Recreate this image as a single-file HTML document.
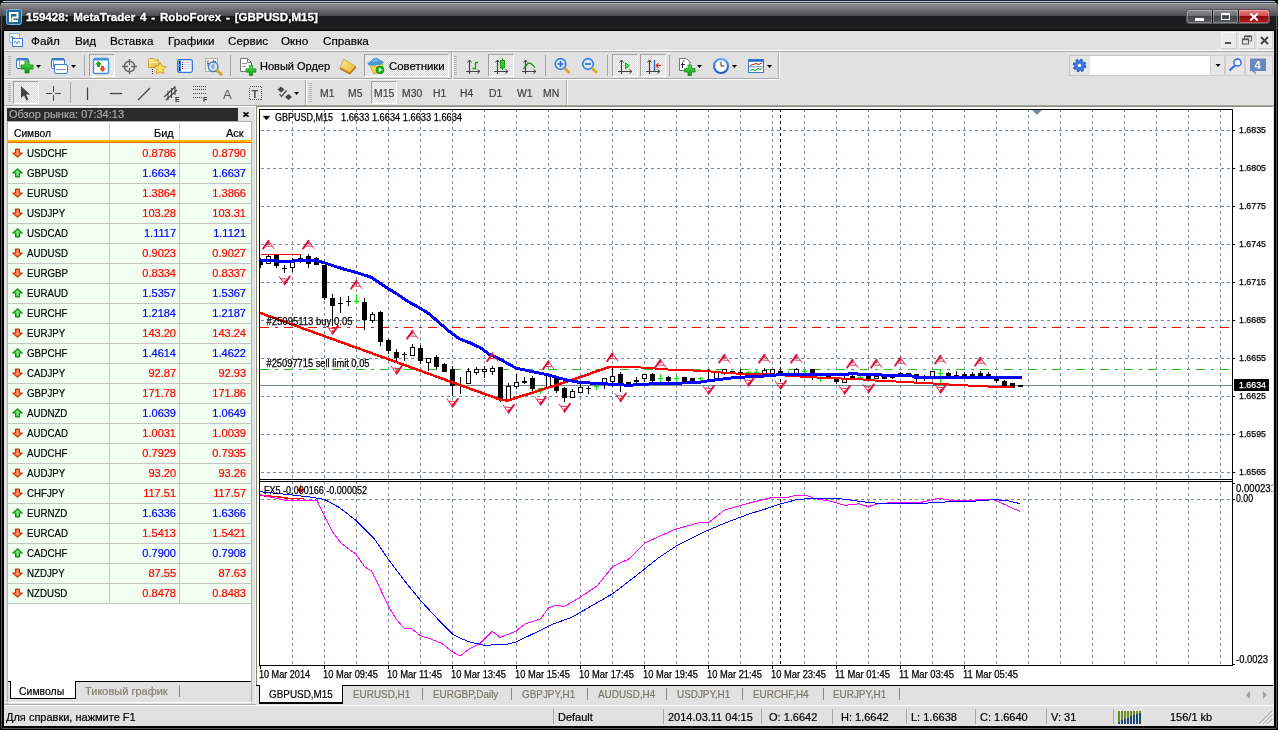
<!DOCTYPE html>
<html lang="ru">
<head>
<meta charset="utf-8">
<title>159428: MetaTrader 4 - RoboForex - [GBPUSD,M15]</title>
<style>
*{box-sizing:border-box;margin:0;padding:0}
html{width:1278px;height:730px;overflow:hidden;background:#000}
body{width:1278px;height:730px;overflow:hidden;background:transparent;will-change:transform}
body{position:relative;font-family:"Liberation Sans",sans-serif;font-size:11px;color:#000;line-height:1}
.a{position:absolute}
.t{position:absolute;white-space:nowrap;line-height:12px;-webkit-text-stroke:.2px}
#title{left:0;top:0;width:1278px;height:31px;background:linear-gradient(#222 0,#222 1px,#aec6ee 1px,#aec6ee 2px,#333 2px,#333 3px,#b0b0b2 3px,#b0b0b2 4px,#8c8c90 4px,#4c4c50 16px,#1d1d1f 16px,#1d1d1f 30px,#000 30px);border-radius:7px 7px 0 0}
#client{left:4px;top:31px;width:1270px;height:695px;background:#e1e1e1}
#ttext{left:26px;top:10px;color:#fff;font-weight:bold;font-size:11.6px;word-spacing:1.6px;-webkit-text-stroke:.3px #fff;line-height:14px;text-shadow:0 0 3px #000,0 1px 2px #000}
.menu{top:34px;font-size:11.7px;line-height:13px}
.hl{position:absolute;height:1px}
.vl{position:absolute;width:1px}
.chk{background-color:#f4f4f4;background-image:linear-gradient(45deg,#dcdcdc 25%,transparent 25%,transparent 75%,#dcdcdc 75%),linear-gradient(45deg,#dcdcdc 25%,transparent 25%,transparent 75%,#dcdcdc 75%);background-size:2px 2px;background-position:0 0,1px 1px;border:1px solid #fff;border-top-color:#a0a0a0;border-left-color:#a0a0a0}
.grip{position:absolute;width:3px;background:repeating-linear-gradient(#b4b4b4 0,#b4b4b4 1px,transparent 1px,transparent 2px)}
.tf{top:88px;font-size:10px;color:#444;line-height:12px;transform:scaleX(1.04);transform-origin:0 0}
.row{position:absolute;left:8px;width:243px;height:20px;background:#f0fff0;border-bottom:1px solid #c4c4c4}
.row span{-webkit-text-stroke:.2px}
.row .s{position:absolute;left:19px;top:3px;line-height:12px;transform:scaleX(.88);transform-origin:0 0}
.row .b{position:absolute;right:75px;top:3px;line-height:12px}
.row .k{position:absolute;right:5px;top:3px;line-height:12px}
.row .c1{position:absolute;left:101px;top:0;width:1px;height:19px;background:#c4c4c4}
.row .c2{position:absolute;left:171px;top:0;width:1px;height:19px;background:#c4c4c4}
.up .b,.up .k{color:#0000ff}
.dn .b,.dn .k{color:#ff0000}
.ar{position:absolute;left:4px;top:4px;width:11px;height:11px}
.ctab{top:688px;font-size:11px;color:#7a776a;line-height:12px;transform:scaleX(.9);transform-origin:0 0}
.st{top:711px;font-size:11px;line-height:12px}
svg text{font-family:"Liberation Sans",sans-serif}
</style>
</head>
<body>
<div id="title" class="a"></div>
<svg class="a" style="left:6px;top:9px" width="16" height="16" viewBox="0 0 16 16"><rect x="0.5" y="0.5" width="15" height="15" rx="2" fill="#1f6b9a" stroke="#7fb4d6"/><path d="M4 13V4h7.5v4.5H6.5M6.5 8.5V12h5.5" fill="none" stroke="#fff" stroke-width="2"/></svg>
<div id="ttext" class="t">159428: MetaTrader 4 - RoboForex - [GBPUSD,M15]</div>
<!-- window buttons -->
<div class="a" style="left:1186px;top:9px;width:84px;height:15px;border-radius:3px;background:#111;border:1px solid #55575b"></div>
<div class="a" style="left:1187px;top:10px;width:25px;height:13px;background:linear-gradient(#8a8b8f 0,#6c6d71 46%,#45464a 50%,#58595d 100%);box-shadow:inset 0 0 0 1px rgba(255,255,255,.28);border-radius:2px 0 0 2px"></div>
<div class="a" style="left:1213px;top:10px;width:25px;height:13px;background:linear-gradient(#8a8b8f 0,#6c6d71 46%,#45464a 50%,#58595d 100%);box-shadow:inset 0 0 0 1px rgba(255,255,255,.28)"></div>
<div class="a" style="left:1239px;top:10px;width:30px;height:13px;background:linear-gradient(#ea8080 0,#d05054 46%,#8a0a0c 50%,#a82024 100%);box-shadow:inset 0 0 0 1px rgba(255,255,255,.25);border-radius:0 2px 2px 0"></div>
<div class="a" style="left:1195px;top:18px;width:9px;height:3px;background:#fff"></div>
<div class="a" style="left:1221px;top:13px;width:9px;height:7px;border:1px solid #fff;border-top-width:2px"></div>
<svg class="a" style="left:1249px;top:13px" width="10" height="8" viewBox="0 0 10 8"><path d="M1.300 .5L8.700 7.500M8.700 .5L1.300 7.500" stroke="#fff" stroke-width="2"/></svg>
<div class="vl" style="left:1px;top:8px;height:720px;background:#555"></div><div class="vl" style="left:1276px;top:12px;height:716px;background:#555"></div><div class="hl" style="left:2px;top:728px;width:1274px;background:#555"></div>
<div id="client" class="a"></div>
<!-- menu bar -->
<div class="hl" style="left:4px;top:50px;width:1270px;background:#fff"></div>
<div class="hl" style="left:4px;top:51px;width:1270px;background:#a8a8a8"></div>
<svg class="a" style="left:8px;top:32px" width="16" height="16" viewBox="0 0 16 16"><rect x="1.5" y="1.5" width="10" height="9" fill="#f4f8ff" stroke="#3b7ad8" stroke-dasharray="1 1"/><rect x="4.5" y="6.5" width="10" height="8" fill="#fff" stroke="#3b7ad8"/><path d="M3 6l1-2 1 3 1-2M6 11l1.5-2 1.5 3 1.5-3 1.5 2" fill="none" stroke="#3b7ad8" stroke-width=".8"/></svg>
<div class="t menu" style="left:31px">Файл</div>
<div class="t menu" style="left:75px">Вид</div>
<div class="t menu" style="left:110px">Вставка</div>
<div class="t menu" style="left:168px">Графики</div>
<div class="t menu" style="left:228px">Сервис</div>
<div class="t menu" style="left:281px">Окно</div>
<div class="t menu" style="left:323px">Справка</div>
<!-- mdi buttons -->
<div class="a" style="left:1221px;top:32px;width:16px;height:17px;background:#eaeaea;border:1px solid #f4f4f4;border-right-color:#cfcfcf;border-bottom-color:#cfcfcf"></div>
<div class="a" style="left:1239px;top:32px;width:16px;height:17px;background:#eaeaea;border:1px solid #f4f4f4;border-right-color:#cfcfcf;border-bottom-color:#cfcfcf"></div>
<div class="a" style="left:1257px;top:32px;width:16px;height:17px;background:#eaeaea;border:1px solid #f4f4f4;border-right-color:#cfcfcf;border-bottom-color:#cfcfcf"></div>
<div class="a" style="left:1225px;top:42px;width:6px;height:2px;background:#555"></div>
<svg class="a" style="left:1242px;top:35px" width="10" height="10" viewBox="0 0 10 10"><path d="M2.5 3V1h7v5h-2" fill="none" stroke="#555" stroke-width="1"/><path d="M2.5 1.5h7" stroke="#555" stroke-width="1.5"/><rect x="0.5" y="4" width="6" height="5" fill="none" stroke="#555"/><path d="M0.5 4.5h6" stroke="#555" stroke-width="1.5"/></svg>
<svg class="a" style="left:1260px;top:36px" width="9" height="9" viewBox="0 0 9 9"><path d="M1 1L8 8M8 1L1 8" stroke="#444" stroke-width="2"/></svg>
<!-- toolbar rows separators -->
<div class="hl" style="left:4px;top:78px;width:776px;background:#a8a8a8"></div>
<div class="hl" style="left:4px;top:79px;width:776px;background:#fff"></div>
<div class="hl" style="left:4px;top:105px;width:1270px;background:#a8a8a8"></div>
<div class="vl" style="left:778px;top:52px;height:27px;background:#a8a8a8"></div>
<div class="vl" style="left:779px;top:52px;height:27px;background:#fff"></div>
<div class="vl" style="left:566px;top:80px;height:25px;background:#a8a8a8"></div>
<div class="vl" style="left:567px;top:80px;height:25px;background:#fff"></div>
<div class="grip" style="left:8px;top:56px;height:19px"></div>
<div class="grip" style="left:8px;top:83px;height:19px"></div>
<div class="grip" style="left:454px;top:56px;height:19px"></div>
<div class="grip" style="left:309px;top:83px;height:19px"></div>
<div class="vl" style="left:305px;top:80px;height:25px;background:#a8a8a8"></div>
<div class="vl" style="left:306px;top:80px;height:25px;background:#fff"></div>
<div class="vl" style="left:451px;top:52px;height:27px;background:#a8a8a8"></div>
<div class="vl" style="left:452px;top:52px;height:27px;background:#fff"></div>
<!-- pressed buttons -->
<div class="a chk" style="left:89px;top:54px;width:26px;height:23px"></div>
<div class="a chk" style="left:364px;top:54px;width:85px;height:23px"></div>
<div class="a chk" style="left:488px;top:54px;width:26px;height:23px"></div>
<div class="a chk" style="left:612px;top:54px;width:26px;height:23px"></div>
<div class="a chk" style="left:640px;top:54px;width:26px;height:23px"></div>
<div class="a chk" style="left:13px;top:81px;width:26px;height:23px"></div>
<div class="a chk" style="left:371px;top:81px;width:26px;height:23px"></div>
<svg class="a" style="left:0;top:0" width="1278" height="108" viewBox="0 0 1278 108">
<defs>
<linearGradient id="gp" x1="0" y1="0" x2="0" y2="1"><stop offset="0" stop-color="#5be25b"/><stop offset="1" stop-color="#0a9a0a"/></linearGradient>
<linearGradient id="gy" x1="0" y1="0" x2="1" y2="1"><stop offset="0" stop-color="#fff2a8"/><stop offset="1" stop-color="#e8b028"/></linearGradient>
<linearGradient id="gb" x1="0" y1="0" x2="0" y2="1"><stop offset="0" stop-color="#5aa0f0"/><stop offset="1" stop-color="#1c5fc0"/></linearGradient>
<g id="dd"><path d="M0 0h5l-2.5 3z" fill="#000"/></g>
<g id="plus"><path d="M4 0h4v4h4v4h-4v4h-4v-4h-4v-4h4z" fill="url(#gp)" stroke="#0a8a0a" stroke-width=".8"/></g>
<g id="axes"><path d="M3.5 0v14M0 11.5h14" stroke="#444" stroke-width="1.2" fill="none"/><path d="M1.5 2.5l2-2.5 2 2.5M11.5 9.5l2.5 2-2.5 2" stroke="#444" stroke-width="1" fill="none"/></g>
</defs>
<!-- separators -->
<g stroke="#a4a4a4"><path d="M84.5 55v21M230.500 55v21M545.500 55v21M607.500 55v21M669.500 55v21M70.500 82v21"/></g>
<!-- new chart -->
<rect x="16.500" y="58.500" width="12" height="10" rx="1.500" fill="#fff" stroke="#3a7bc8"/><path d="M17 59.500h11" stroke="#3a7bc8" stroke-width="2"/><path d="M19.500 61v6" stroke="#8aa0b8"/>
<use href="#plus" x="21" y="61"/>
<use href="#dd" x="36" y="65"/>
<!-- profiles -->
<rect x="51.500" y="58.500" width="13" height="10" rx="1.500" fill="#fff" stroke="#3a7bc8"/><path d="M52 59.500h12" stroke="#3a7bc8" stroke-width="2"/><path d="M53.500 61v6M54 64.500h8" stroke="#7f9ab8"/>
<rect x="54.500" y="64.500" width="13" height="9" rx="1.500" fill="#fff" stroke="#3a7bc8"/><path d="M56 69.500h10" stroke="#7f9ab8"/>
<use href="#dd" x="71" y="65"/>
<!-- market watch -->
<rect x="93.500" y="58.500" width="15" height="15" rx="1.500" fill="#fff" stroke="#4a90e0" stroke-width="1.400"/><path d="M94 59.500h14" stroke="#4a90e0" stroke-width="2"/>
<path d="M98.500 61l3.500 3.500h-2v2.500h-3v-2.500h-2z" fill="#18a818"/><path d="M102.500 72l-3.500-3.500h2v-2.500h3v2.500h2z" fill="#e8501c"/>
<!-- navigator crosshair -->
<circle cx="129.500" cy="66.500" r="5.200" fill="none" stroke="#666" stroke-width="1.500"/><path d="M129.500 59v6M129.500 68v6M122 66.500h6M131 66.500h6" stroke="#666" stroke-width="1.300"/>
<!-- folder star -->
<path d="M148.500 59.500l1-1h4l1.500 1.500h3.500v7.500h-10z" fill="url(#gy)" stroke="#c8a028"/><path d="M149 62.500h9.500" stroke="#fff6c8"/><path d="M160 62.200l1.900 3.800 4.200.6-3 3 .7 4.200-3.800-2-3.800 2 .7-4.200-3-3 4.200-.6z" fill="#ffe25a" stroke="#c89a20" stroke-width=".9"/><path d="M152.500 69v6" stroke="#333" stroke-dasharray="1 1" shape-rendering="crispEdges"/>
<!-- terminal window -->
<rect x="177.700" y="59.700" width="14.600" height="12.600" rx="1.500" fill="#fff" stroke="#2a6fd8" stroke-width="1.200"/><path d="M178.500 60.500h2.500v11h-2.500z" fill="#3a7ae0"/><path d="M179.500 61v3M179.500 67v4" stroke="#222"/><path d="M183 62.500h8M183 64.500h8M183 66.500h8M183 68.500h8" stroke="#b8ccf0" stroke-width=".8"/><path d="M182 62.500h1M182 68.500h1" stroke="#f02020"/><path d="M182 64.500h1M182 66.500h1" stroke="#222"/>
<!-- strategy tester -->
<rect x="205.500" y="58.500" width="12" height="13" fill="#f4f0e8" stroke="#b8b098"/><path d="M208 60v6M207 63.500h3M213.500 60v5M213 61.500h3" stroke="#666" fill="none"/><circle cx="213.200" cy="66.800" r="4.800" fill="#cfe0f8" fill-opacity=".85" stroke="#3a80e0" stroke-width="1.400"/><path d="M211.500 64.500h3v4h-3z" fill="#98a8c0"/><path d="M217 70.500l4.500 4" stroke="#d8a020" stroke-width="2.600" stroke-linecap="round"/>
<!-- new order -->
<path d="M240.500 58.500h7l4 4v9h-11z" fill="#fff" stroke="#777"/><path d="M247.500 58.500v4h4" fill="none" stroke="#777"/><path d="M242 63.500h5M242 66.500h4" stroke="#999"/>
<g transform="translate(246 65.500) scale(.83)"><use href="#plus"/></g>
<!-- book -->
<path d="M340.300 67.400l9.400 5.100 5.700-6.500.2 2-5.700 6.200-9.900-5.200z" fill="#c0801a" stroke="#a06a10" stroke-width=".6"/><path d="M343.600 59.400l11.800 6.600-5.700 6.500-9.400-5.100z" fill="url(#gy)" stroke="#c89a20" stroke-width=".8"/>
<!-- experts -->
<path d="M369 64h14l-3.500 9-6 .5z" fill="#f4d040" stroke="#c8a020" stroke-width=".8"/><path d="M370 65.500h12" stroke="#fff0a0"/><g transform="rotate(-6 375.500 62)"><ellipse cx="375.500" cy="63" rx="8.200" ry="2.600" fill="#4a98d8"/><path d="M371 62.500c0-5.500 9.500-5.500 9.500 0z" fill="#6ab4ec" stroke="#3a88c8" stroke-width=".7"/></g><circle cx="380" cy="69.800" r="4" fill="#18b018" stroke="#0a8a0a" stroke-width=".6"/><path d="M378.800 67.600v4.400l3.500-2.200z" fill="#fff"/>
<!-- chart type icons -->
<use href="#axes" x="466" y="60"/><path d="M475.500 62v7.500M475.500 62.500h2.500M472.500 68.500h3" stroke="#18a018" stroke-width="1.300" fill="none"/>
<use href="#axes" x="494" y="60"/><path d="M502.500 58.500v11.500" stroke="#0a800a"/><rect x="500.500" y="60.500" width="4" height="7.500" fill="#30d030" stroke="#0a900a" stroke-width=".8"/>
<use href="#axes" x="522" y="60"/><path d="M523.500 69c2-3 4-6 6-6s3.500 2.500 5.500 4.500" stroke="#2a8a2a" stroke-width="1.300" fill="none"/>
<!-- zoom in/out -->
<circle cx="560.500" cy="64" r="5.300" fill="#d8ecff" stroke="#3a80e0" stroke-width="1.700"/><path d="M557.500 64h6M560.500 61v6" stroke="#2a6ad0" stroke-width="1.600"/><path d="M564.500 68l5 5" stroke="#d8a828" stroke-width="2.600"/>
<circle cx="588" cy="64" r="5.300" fill="#d8ecff" stroke="#3a80e0" stroke-width="1.700"/><path d="M585 64h6" stroke="#2a6ad0" stroke-width="1.600"/><path d="M592 68l5 5" stroke="#d8a828" stroke-width="2.600"/>
<!-- autoscroll / shift -->
<use href="#axes" x="618" y="60"/><path d="M625.500 62.800v6l3.800-3z" fill="#50e050" stroke="#10a010" stroke-width=".9"/>
<use href="#axes" x="646" y="60"/><path d="M654.500 60v11" stroke="#2a60c0" stroke-width="1.300"/><path d="M656 65.500h5M656 65.500l2.500-2M656 65.500l2.500 2" stroke="#e02a10" stroke-width="1.200" fill="none"/>
<!-- indicators -->
<path d="M679.500 58.500h7l3.500 3.500v8.500h-10.500z" fill="#fff" stroke="#777"/><path d="M684.500 61c-2 0-2 1-2 3v4" stroke="#333" fill="none"/><path d="M681 64.500h4" stroke="#333"/>
<g transform="translate(684.500 65) scale(.88)"><use href="#plus"/></g>
<use href="#dd" x="697" y="65"/>
<!-- clock -->
<circle cx="721" cy="66" r="7" fill="#fff" stroke="url(#gb)" stroke-width="2.200"/><path d="M721 61.500v4.500h3.500" stroke="#333" fill="none"/>
<use href="#dd" x="732" y="65"/>
<!-- templates -->
<rect x="748.500" y="59.500" width="15" height="13" fill="#fff" stroke="#3a7bc8"/><path d="M749 60.500h14" stroke="#2a6ac8" stroke-width="2.500"/><path d="M750 65.500l3-1 3-1 3 1 3-2" stroke="#b02010" fill="none"/><path d="M749 66.800h14" stroke="#3a7bc8" stroke-width=".8"/><path d="M750 70.500l3-1 2 1 3-2 2 1 2-1" stroke="#18a018" fill="none"/>
<use href="#dd" x="767" y="65"/>
<!-- toolbar 2 -->
<path d="M21 86v12l3-2.500 2.500 5 2-1-2.500-5h4z" fill="#444"/>
<path d="M53.500 86v6M53.500 95v6M46 93.500h6M55 93.500h6" stroke="#444" stroke-width="1"/>
<path d="M87.500 87.500v12.500" stroke="#444" stroke-width="1.300"/>
<path d="M110 93.500h12" stroke="#444" stroke-width="1.300"/>
<path d="M138 100l12-12" stroke="#444" stroke-width="1.300"/>
<path d="M164 97l11-10M166 100l11-10M168 91v9M171.500 88v10M175 86v9" stroke="#444" stroke-width="1.100"/>
<text x="175" y="102" font-size="7" font-weight="bold" fill="#333">E</text>
<path d="M193 86.500h13M193 89.500h13M193 93.500h13M193 97.500h9" stroke="#444" stroke-dasharray="1 1" shape-rendering="crispEdges"/>
<text x="203" y="102" font-size="7" font-weight="bold" fill="#333">F</text>
<text x="223" y="98.500" font-size="13" fill="#555">A</text>
<rect x="249.500" y="86.500" width="12" height="13" fill="none" stroke="#555" stroke-dasharray="1 1" shape-rendering="crispEdges"/><text x="251.500" y="98" font-size="11" font-weight="bold" fill="#555">T</text>
<path d="M281 86.500l3.500 3-3.500 3-3.500-3zM288.500 94l3.500 3-3.500 3-3.500-3z" fill="#444"/><path d="M279.500 94l2 2.500 5-6" stroke="#444" fill="none" stroke-width="1.200"/>
<use href="#dd" x="294" y="92"/>
<!-- search -->
<rect x="1069.500" y="55.500" width="141" height="20" fill="#fff" stroke="#c8c8c8"/><rect x="1070" y="56" width="20" height="19" fill="#e6e6e6"/>
<circle cx="1079.500" cy="65.500" r="5.600" fill="#4a80d8" stroke="#2a62c8" stroke-dasharray="2.400 2" stroke-width="2.400"/><circle cx="1079.500" cy="65.500" r="4.300" fill="#3a76dc"/><circle cx="1079.500" cy="65.500" r="1.800" fill="#e8eefa"/>
<rect x="1210.500" y="55.500" width="14" height="20" fill="#e6e6e6" stroke="#d0d0d0"/><use href="#dd" x="1215.500" y="64"/>
<rect x="1225.500" y="55.500" width="19" height="20" fill="#e6e6e6" stroke="#d0d0d0"/><circle cx="1237.500" cy="62.500" r="3.600" fill="#fff" stroke="#2a6ad8" stroke-width="1.500"/><path d="M1235 65.500l-5.500 5" stroke="#2a6ad8" stroke-width="2"/>
<rect x="1245.500" y="55.500" width="27" height="20" fill="#e6e6e6" stroke="#d0d0d0"/><path d="M1250 58.500h16v12.500h-11l1 3.500-4-3.500h-2z" fill="#6a88bc"/><text x="1254.500" y="69" font-size="11" font-weight="bold" fill="#fff">4</text>
</svg>
<div class="t" style="left:260px;top:60px;font-size:11px;line-height:13px">Новый Ордер</div>
<div class="t" style="left:389px;top:60px;font-size:11.4px;line-height:13px">Советники</div>
<div class="t tf" style="left:320px">M1</div>
<div class="t tf" style="left:348px">M5</div>
<div class="t tf" style="left:374px">M15</div>
<div class="t tf" style="left:402px">M30</div>
<div class="t tf" style="left:433px">H1</div>
<div class="t tf" style="left:460px">H4</div>
<div class="t tf" style="left:489px">D1</div>
<div class="t tf" style="left:517px">W1</div>
<div class="t tf" style="left:543px">MN</div>
<!-- market watch -->
<div class="a" style="left:7px;top:121px;width:245px;height:583px;background:#fff;border:1px solid #b0b0b0"></div>
<div class="a" style="left:7px;top:108px;width:231px;height:13px;background:#2c2c2c"></div>
<div class="a" style="left:238px;top:108px;width:14px;height:13px;background:#e1e1e1"></div>
<div class="t" style="left:9px;top:108px;font-size:11px;color:#a8a8a8;line-height:13px">Обзор рынка: 07:34:13</div>
<svg class="a" style="left:243px;top:112px" width="6" height="5" viewBox="0 0 6 5"><path d="M.5.300l5 4.400M5.500.300l-5 4.400" stroke="#000" stroke-width="1.700"/></svg>
<div class="a" style="left:8px;top:122px;width:243px;height:18px;background:#fff"></div>
<div class="vl" style="left:109px;top:123px;height:17px;background:#d0d0d0"></div>
<div class="vl" style="left:179px;top:123px;height:17px;background:#d0d0d0"></div>
<div class="t" style="left:14px;top:127px;transform:scaleX(.93);transform-origin:0 0">Символ</div>
<div class="t" style="left:154px;top:127px">Бид</div>
<div class="t" style="left:226px;top:127px">Аск</div>
<div class="a" style="left:8px;top:140px;width:243px;height:3px;background:linear-gradient(#ffb400 0,#ffb400 2px,#ff6a00 2px)"></div>
<svg width="0" height="0" style="position:absolute"><defs>
<g id="aup"><path d="M5.500.5l5 4.500h-3v4h-4v-4h-3z" fill="#22b422" stroke="#0a7a0a" stroke-width=".9"/><path d="M5.500 2.300l2.500 2.200h-1.500v3.500h-2v-3.500h-1.500z" fill="#8fe88f"/></g>
<g id="adn"><path d="M5.500 9.500l5-4.500h-3v-4h-4v4h-3z" fill="#f0501a" stroke="#b02a08" stroke-width=".9"/><path d="M5.500 7.700l2.500-2.200h-1.500v-3.500h-2v3.500h-1.500z" fill="#ffa078"/></g>
</defs></svg>
<div class="row dn" style="top:144px"><svg class="ar" viewBox="0 0 11 11"><use href="#adn"/></svg><span class="s">USDCHF</span><i class="c1"></i><span class="b">0.8786</span><i class="c2"></i><span class="k">0.8790</span></div>
<div class="row up" style="top:164px"><svg class="ar" viewBox="0 0 11 11"><use href="#aup"/></svg><span class="s">GBPUSD</span><i class="c1"></i><span class="b">1.6634</span><i class="c2"></i><span class="k">1.6637</span></div>
<div class="row dn" style="top:184px"><svg class="ar" viewBox="0 0 11 11"><use href="#adn"/></svg><span class="s">EURUSD</span><i class="c1"></i><span class="b">1.3864</span><i class="c2"></i><span class="k">1.3866</span></div>
<div class="row dn" style="top:204px"><svg class="ar" viewBox="0 0 11 11"><use href="#adn"/></svg><span class="s">USDJPY</span><i class="c1"></i><span class="b">103.28</span><i class="c2"></i><span class="k">103.31</span></div>
<div class="row up" style="top:224px"><svg class="ar" viewBox="0 0 11 11"><use href="#aup"/></svg><span class="s">USDCAD</span><i class="c1"></i><span class="b">1.1117</span><i class="c2"></i><span class="k">1.1121</span></div>
<div class="row dn" style="top:244px"><svg class="ar" viewBox="0 0 11 11"><use href="#adn"/></svg><span class="s">AUDUSD</span><i class="c1"></i><span class="b">0.9023</span><i class="c2"></i><span class="k">0.9027</span></div>
<div class="row dn" style="top:264px"><svg class="ar" viewBox="0 0 11 11"><use href="#adn"/></svg><span class="s">EURGBP</span><i class="c1"></i><span class="b">0.8334</span><i class="c2"></i><span class="k">0.8337</span></div>
<div class="row up" style="top:284px"><svg class="ar" viewBox="0 0 11 11"><use href="#aup"/></svg><span class="s">EURAUD</span><i class="c1"></i><span class="b">1.5357</span><i class="c2"></i><span class="k">1.5367</span></div>
<div class="row up" style="top:304px"><svg class="ar" viewBox="0 0 11 11"><use href="#aup"/></svg><span class="s">EURCHF</span><i class="c1"></i><span class="b">1.2184</span><i class="c2"></i><span class="k">1.2187</span></div>
<div class="row dn" style="top:324px"><svg class="ar" viewBox="0 0 11 11"><use href="#adn"/></svg><span class="s">EURJPY</span><i class="c1"></i><span class="b">143.20</span><i class="c2"></i><span class="k">143.24</span></div>
<div class="row up" style="top:344px"><svg class="ar" viewBox="0 0 11 11"><use href="#aup"/></svg><span class="s">GBPCHF</span><i class="c1"></i><span class="b">1.4614</span><i class="c2"></i><span class="k">1.4622</span></div>
<div class="row dn" style="top:364px"><svg class="ar" viewBox="0 0 11 11"><use href="#adn"/></svg><span class="s">CADJPY</span><i class="c1"></i><span class="b">92.87</span><i class="c2"></i><span class="k">92.93</span></div>
<div class="row dn" style="top:384px"><svg class="ar" viewBox="0 0 11 11"><use href="#adn"/></svg><span class="s">GBPJPY</span><i class="c1"></i><span class="b">171.78</span><i class="c2"></i><span class="k">171.86</span></div>
<div class="row up" style="top:404px"><svg class="ar" viewBox="0 0 11 11"><use href="#aup"/></svg><span class="s">AUDNZD</span><i class="c1"></i><span class="b">1.0639</span><i class="c2"></i><span class="k">1.0649</span></div>
<div class="row dn" style="top:424px"><svg class="ar" viewBox="0 0 11 11"><use href="#adn"/></svg><span class="s">AUDCAD</span><i class="c1"></i><span class="b">1.0031</span><i class="c2"></i><span class="k">1.0039</span></div>
<div class="row dn" style="top:444px"><svg class="ar" viewBox="0 0 11 11"><use href="#adn"/></svg><span class="s">AUDCHF</span><i class="c1"></i><span class="b">0.7929</span><i class="c2"></i><span class="k">0.7935</span></div>
<div class="row dn" style="top:464px"><svg class="ar" viewBox="0 0 11 11"><use href="#adn"/></svg><span class="s">AUDJPY</span><i class="c1"></i><span class="b">93.20</span><i class="c2"></i><span class="k">93.26</span></div>
<div class="row dn" style="top:484px"><svg class="ar" viewBox="0 0 11 11"><use href="#adn"/></svg><span class="s">CHFJPY</span><i class="c1"></i><span class="b">117.51</span><i class="c2"></i><span class="k">117.57</span></div>
<div class="row up" style="top:504px"><svg class="ar" viewBox="0 0 11 11"><use href="#aup"/></svg><span class="s">EURNZD</span><i class="c1"></i><span class="b">1.6336</span><i class="c2"></i><span class="k">1.6366</span></div>
<div class="row dn" style="top:524px"><svg class="ar" viewBox="0 0 11 11"><use href="#adn"/></svg><span class="s">EURCAD</span><i class="c1"></i><span class="b">1.5413</span><i class="c2"></i><span class="k">1.5421</span></div>
<div class="row up" style="top:544px"><svg class="ar" viewBox="0 0 11 11"><use href="#aup"/></svg><span class="s">CADCHF</span><i class="c1"></i><span class="b">0.7900</span><i class="c2"></i><span class="k">0.7908</span></div>
<div class="row dn" style="top:564px"><svg class="ar" viewBox="0 0 11 11"><use href="#adn"/></svg><span class="s">NZDJPY</span><i class="c1"></i><span class="b">87.55</span><i class="c2"></i><span class="k">87.63</span></div>
<div class="row dn" style="top:584px"><svg class="ar" viewBox="0 0 11 11"><use href="#adn"/></svg><span class="s">NZDUSD</span><i class="c1"></i><span class="b">0.8478</span><i class="c2"></i><span class="k">0.8483</span></div>
<div class="hl" style="left:8px;top:143px;width:243px;background:#f0fff0"></div><div class="vl" style="left:109px;top:143px;height:1px;background:#c4c4c4"></div><div class="vl" style="left:179px;top:143px;height:1px;background:#c4c4c4"></div>
<!-- mw tabs -->
<div class="a" style="left:8px;top:681px;width:243px;height:23px;background:#e1e1e1"></div>
<div class="hl" style="left:8px;top:681px;width:243px;background:#000"></div>
<div class="a" style="left:10px;top:681px;width:66px;height:18px;background:#fff;border:1px solid #000;border-top:none"></div>
<div class="t" style="left:19px;top:685px;font-size:11px;line-height:13px;transform:scaleX(.95);transform-origin:0 0">Символы</div>
<div class="t" style="left:85px;top:685px;font-size:11px;line-height:13px;color:#858270">Тиковый график</div>
<div class="vl" style="left:179px;top:685px;height:12px;background:#888"></div>
<div class="hl" style="left:7px;top:702px;width:245px;background:#fff"></div>
<!-- chart window -->
<div class="a" style="left:256px;top:106px;width:1017px;height:579px;background:#fff;border-top:1px solid #8c8878;border-left:1px solid #8c8878"></div>
<div class="vl" style="left:256px;top:685px;height:19px;background:#8c8878"></div>
<div class="vl" style="left:255px;top:106px;height:598px;background:#f4f4f4"></div>
<div class="hl" style="left:4px;top:106px;width:251px;background:#fff"></div>
<svg class="a" style="left:0;top:0" width="1278" height="690" viewBox="0 0 1278 690" shape-rendering="crispEdges">
<defs><clipPath id="cm"><rect x="260" y="110" width="972" height="369"/></clipPath><clipPath id="cr"><rect x="1233" y="480" width="39.500" height="20"/></clipPath><clipPath id="cs"><rect x="260" y="482" width="972" height="183"/></clipPath>
<g id="fu" shape-rendering="auto" stroke="#dc143c" fill="none"><path d="M.2 .8L-5.200 8.600" stroke-width="1.900" stroke-linecap="round"/><path d="M0 .5L5.800 8.800" stroke-width=".9"/><path d="M-2.500 6L3.600 6.300" stroke-width=".9"/><path d="M0 .8L-2 4.500L.9 3.600z" fill="#dc143c" stroke-width=".5"/></g>
<g id="fd" shape-rendering="auto"><use href="#fu" transform="rotate(180)"/></g>
</defs>
<g stroke="#778899" stroke-width="1" stroke-dasharray="3 3" fill="none">
<path d="M292.5 109V479"/><path d="M292.5 481V665"/>
<path d="M324.5 109V479"/><path d="M324.5 481V665"/>
<path d="M356.5 109V479"/><path d="M356.5 481V665"/>
<path d="M388.5 109V479"/><path d="M388.5 481V665"/>
<path d="M420.5 109V479"/><path d="M420.5 481V665"/>
<path d="M452.5 109V479"/><path d="M452.5 481V665"/>
<path d="M484.5 109V479"/><path d="M484.5 481V665"/>
<path d="M516.5 109V479"/><path d="M516.5 481V665"/>
<path d="M548.5 109V479"/><path d="M548.5 481V665"/>
<path d="M580.5 109V479"/><path d="M580.5 481V665"/>
<path d="M612.5 109V479"/><path d="M612.5 481V665"/>
<path d="M644.5 109V479"/><path d="M644.5 481V665"/>
<path d="M676.5 109V479"/><path d="M676.5 481V665"/>
<path d="M708.5 109V479"/><path d="M708.5 481V665"/>
<path d="M740.5 109V479"/><path d="M740.5 481V665"/>
<path d="M772.5 109V479"/><path d="M772.5 481V665"/>
<path d="M804.5 109V479"/><path d="M804.5 481V665"/>
<path d="M836.5 109V479"/><path d="M836.5 481V665"/>
<path d="M868.5 109V479"/><path d="M868.5 481V665"/>
<path d="M900.5 109V479"/><path d="M900.5 481V665"/>
<path d="M932.5 109V479"/><path d="M932.5 481V665"/>
<path d="M964.5 109V479"/><path d="M964.5 481V665"/>
<path d="M996.5 109V479"/><path d="M996.5 481V665"/>
<path d="M1028.5 109V479"/><path d="M1028.5 481V665"/>
<path d="M1060.5 109V479"/><path d="M1060.5 481V665"/>
<path d="M1092.5 109V479"/><path d="M1092.5 481V665"/>
<path d="M1124.5 109V479"/><path d="M1124.5 481V665"/>
<path d="M1156.5 109V479"/><path d="M1156.5 481V665"/>
<path d="M1188.5 109V479"/><path d="M1188.5 481V665"/>
<path d="M1220.5 109V479"/><path d="M1220.5 481V665"/>
<path d="M261 130.5H1232"/>
<path d="M261 168.5H1232"/>
<path d="M261 206.5H1232"/>
<path d="M261 244.5H1232"/>
<path d="M261 282.5H1232"/>
<path d="M261 320.5H1232"/>
<path d="M261 358.5H1232"/>
<path d="M261 396.5H1232"/>
<path d="M261 434.5H1232"/>
<path d="M261 472.5H1232"/>
<path d="M261 499.500H1232"/>
</g>
<path d="M780.500 109V479M780.500 481V665" stroke="#000" stroke-dasharray="3 3" fill="none"/>
<path d="M260 385.500H1232" stroke="#778899"/>
<path d="M260 327.500H1232" stroke="#ff0000" stroke-dasharray="9 6 3 6"/>
<path d="M260 369.500H1232" stroke="#22c022" stroke-dasharray="9 6 3 6"/>
<path d="M1032 110h10l-5 5z" fill="#778899" shape-rendering="auto"/>
<g clip-path="url(#cm)">
<rect x="260" y="258" width="1" height="10" fill="#000"/>
<rect x="258" y="261" width="5" height="4" fill="#000"/>
<rect x="268" y="255" width="1" height="9" fill="#000"/>
<rect x="266" y="256" width="5" height="8" fill="#000"/>
<rect x="267" y="257" width="3" height="6" fill="#fff"/>
<rect x="276" y="255" width="1" height="13" fill="#000"/>
<rect x="274" y="255" width="5" height="11" fill="#000"/>
<rect x="284" y="265" width="1" height="8" fill="#000"/>
<rect x="282" y="268" width="5" height="1" fill="#000"/>
<rect x="292" y="258" width="1" height="14" fill="#000"/>
<rect x="290" y="262" width="5" height="6" fill="#000"/>
<rect x="291" y="263" width="3" height="4" fill="#fff"/>
<rect x="300" y="255" width="1" height="8" fill="#000"/>
<rect x="298" y="258" width="5" height="1" fill="#000"/>
<rect x="308" y="254" width="1" height="14" fill="#000"/>
<rect x="306" y="256" width="5" height="8" fill="#000"/>
<rect x="316" y="257" width="1" height="8" fill="#000"/>
<rect x="314" y="258" width="5" height="7" fill="#000"/>
<rect x="324" y="265" width="1" height="35" fill="#000"/>
<rect x="322" y="265" width="5" height="33" fill="#000"/>
<rect x="332" y="294" width="1" height="32" fill="#000"/>
<rect x="330" y="298" width="5" height="8" fill="#000"/>
<rect x="340" y="297" width="1" height="16" fill="#000"/>
<rect x="338" y="303" width="5" height="1" fill="#000"/>
<rect x="348" y="296" width="1" height="10" fill="#000"/>
<rect x="346" y="301" width="5" height="1" fill="#000"/>
<rect x="356" y="294" width="1" height="10" fill="#00e000"/>
<rect x="354" y="301" width="5" height="1" fill="#00e000"/>
<rect x="364" y="298" width="1" height="32" fill="#000"/>
<rect x="362" y="302" width="5" height="18" fill="#000"/>
<rect x="372" y="312" width="1" height="11" fill="#000"/>
<rect x="370" y="314" width="5" height="7" fill="#000"/>
<rect x="371" y="315" width="3" height="5" fill="#fff"/>
<rect x="380" y="311" width="1" height="35" fill="#000"/>
<rect x="378" y="312" width="5" height="30" fill="#000"/>
<rect x="388" y="339" width="1" height="15" fill="#000"/>
<rect x="386" y="340" width="5" height="11" fill="#000"/>
<rect x="396" y="349" width="1" height="12" fill="#000"/>
<rect x="394" y="352" width="5" height="6" fill="#000"/>
<rect x="404" y="352" width="1" height="9" fill="#000"/>
<rect x="402" y="354" width="5" height="1" fill="#000"/>
<rect x="412" y="344" width="1" height="12" fill="#000"/>
<rect x="410" y="347" width="5" height="9" fill="#000"/>
<rect x="411" y="348" width="3" height="7" fill="#fff"/>
<rect x="420" y="345" width="1" height="19" fill="#000"/>
<rect x="418" y="348" width="5" height="13" fill="#000"/>
<rect x="428" y="358" width="1" height="13" fill="#000"/>
<rect x="426" y="358" width="5" height="5" fill="#000"/>
<rect x="427" y="359" width="3" height="3" fill="#fff"/>
<rect x="436" y="355" width="1" height="14" fill="#000"/>
<rect x="434" y="357" width="5" height="10" fill="#000"/>
<rect x="444" y="363" width="1" height="9" fill="#000"/>
<rect x="442" y="364" width="5" height="8" fill="#000"/>
<rect x="452" y="366" width="1" height="30" fill="#000"/>
<rect x="450" y="369" width="5" height="17" fill="#000"/>
<rect x="460" y="377" width="1" height="17" fill="#000"/>
<rect x="458" y="385" width="5" height="1" fill="#000"/>
<rect x="468" y="368" width="1" height="16" fill="#000"/>
<rect x="466" y="371" width="5" height="13" fill="#000"/>
<rect x="467" y="372" width="3" height="11" fill="#fff"/>
<rect x="476" y="367" width="1" height="8" fill="#000"/>
<rect x="474" y="369" width="5" height="4" fill="#000"/>
<rect x="475" y="370" width="3" height="2" fill="#fff"/>
<rect x="484" y="366" width="1" height="12" fill="#000"/>
<rect x="482" y="369" width="5" height="3" fill="#000"/>
<rect x="483" y="370" width="3" height="1" fill="#fff"/>
<rect x="492" y="366" width="1" height="9" fill="#000"/>
<rect x="490" y="368" width="5" height="4" fill="#000"/>
<rect x="491" y="369" width="3" height="2" fill="#fff"/>
<rect x="500" y="367" width="1" height="35" fill="#000"/>
<rect x="498" y="367" width="5" height="33" fill="#000"/>
<rect x="508" y="383" width="1" height="17" fill="#000"/>
<rect x="506" y="386" width="5" height="14" fill="#000"/>
<rect x="507" y="387" width="3" height="12" fill="#fff"/>
<rect x="516" y="374" width="1" height="15" fill="#000"/>
<rect x="514" y="382" width="5" height="5" fill="#000"/>
<rect x="515" y="383" width="3" height="3" fill="#fff"/>
<rect x="524" y="377" width="1" height="7" fill="#000"/>
<rect x="522" y="381" width="5" height="2" fill="#000"/>
<rect x="532" y="376" width="1" height="16" fill="#000"/>
<rect x="530" y="378" width="5" height="11" fill="#000"/>
<rect x="540" y="388" width="1" height="6" fill="#00e000"/>
<rect x="538" y="388" width="5" height="1" fill="#00e000"/>
<rect x="548" y="374" width="1" height="14" fill="#000"/>
<rect x="546" y="374" width="5" height="14" fill="#000"/>
<rect x="547" y="375" width="3" height="12" fill="#fff"/>
<rect x="556" y="378" width="1" height="15" fill="#000"/>
<rect x="554" y="378" width="5" height="13" fill="#000"/>
<rect x="564" y="387" width="1" height="15" fill="#000"/>
<rect x="562" y="388" width="5" height="10" fill="#000"/>
<rect x="572" y="389" width="1" height="9" fill="#000"/>
<rect x="570" y="391" width="5" height="7" fill="#000"/>
<rect x="571" y="392" width="3" height="5" fill="#fff"/>
<rect x="580" y="382" width="1" height="11" fill="#000"/>
<rect x="578" y="387" width="5" height="6" fill="#000"/>
<rect x="579" y="388" width="3" height="4" fill="#fff"/>
<rect x="588" y="386" width="1" height="8" fill="#000"/>
<rect x="586" y="388" width="5" height="1" fill="#000"/>
<rect x="596" y="385" width="1" height="5" fill="#00e000"/>
<rect x="594" y="386" width="5" height="1" fill="#00e000"/>
<rect x="604" y="378" width="1" height="11" fill="#000"/>
<rect x="602" y="378" width="5" height="7" fill="#000"/>
<rect x="603" y="379" width="3" height="5" fill="#fff"/>
<rect x="612" y="368" width="1" height="19" fill="#000"/>
<rect x="610" y="376" width="5" height="6" fill="#000"/>
<rect x="611" y="377" width="3" height="4" fill="#fff"/>
<rect x="620" y="372" width="1" height="20" fill="#000"/>
<rect x="618" y="374" width="5" height="9" fill="#000"/>
<rect x="628" y="382" width="1" height="2" fill="#000"/>
<rect x="626" y="382" width="5" height="2" fill="#000"/>
<rect x="636" y="377" width="1" height="6" fill="#000"/>
<rect x="634" y="380" width="5" height="2" fill="#000"/>
<rect x="644" y="374" width="1" height="8" fill="#000"/>
<rect x="642" y="374" width="5" height="5" fill="#000"/>
<rect x="643" y="375" width="3" height="3" fill="#fff"/>
<rect x="652" y="373" width="1" height="10" fill="#000"/>
<rect x="650" y="374" width="5" height="7" fill="#000"/>
<rect x="660" y="374" width="1" height="9" fill="#00e000"/>
<rect x="658" y="378" width="5" height="1" fill="#00e000"/>
<rect x="668" y="376" width="1" height="7" fill="#000"/>
<rect x="666" y="377" width="5" height="4" fill="#000"/>
<rect x="676" y="376" width="1" height="6" fill="#00e000"/>
<rect x="674" y="378" width="5" height="1" fill="#00e000"/>
<rect x="684" y="377" width="1" height="5" fill="#000"/>
<rect x="682" y="377" width="5" height="5" fill="#000"/>
<rect x="692" y="378" width="1" height="5" fill="#000"/>
<rect x="690" y="378" width="5" height="3" fill="#000"/>
<rect x="700" y="377" width="1" height="5" fill="#00e000"/>
<rect x="698" y="378" width="5" height="1" fill="#00e000"/>
<rect x="708" y="369" width="1" height="13" fill="#000"/>
<rect x="706" y="380" width="5" height="1" fill="#000"/>
<rect x="716" y="372" width="1" height="9" fill="#000"/>
<rect x="714" y="372" width="5" height="9" fill="#000"/>
<rect x="715" y="373" width="3" height="7" fill="#fff"/>
<rect x="724" y="369" width="1" height="6" fill="#000"/>
<rect x="722" y="369" width="5" height="4" fill="#000"/>
<rect x="723" y="370" width="3" height="2" fill="#fff"/>
<rect x="732" y="371" width="1" height="2" fill="#000"/>
<rect x="730" y="371" width="5" height="2" fill="#000"/>
<rect x="740" y="369" width="1" height="7" fill="#000"/>
<rect x="738" y="372" width="5" height="1" fill="#000"/>
<rect x="748" y="371" width="1" height="4" fill="#00e000"/>
<rect x="746" y="372" width="5" height="1" fill="#00e000"/>
<rect x="756" y="370" width="1" height="5" fill="#00e000"/>
<rect x="754" y="372" width="5" height="1" fill="#00e000"/>
<rect x="764" y="368" width="1" height="6" fill="#000"/>
<rect x="762" y="370" width="5" height="4" fill="#000"/>
<rect x="763" y="371" width="3" height="2" fill="#fff"/>
<rect x="772" y="369" width="1" height="5" fill="#000"/>
<rect x="770" y="369" width="5" height="5" fill="#000"/>
<rect x="771" y="370" width="3" height="3" fill="#fff"/>
<rect x="780" y="368" width="1" height="8" fill="#000"/>
<rect x="778" y="371" width="5" height="2" fill="#000"/>
<rect x="788" y="371" width="1" height="5" fill="#00e000"/>
<rect x="786" y="373" width="5" height="1" fill="#00e000"/>
<rect x="796" y="368" width="1" height="6" fill="#000"/>
<rect x="794" y="369" width="5" height="5" fill="#000"/>
<rect x="795" y="370" width="3" height="3" fill="#fff"/>
<rect x="804" y="369" width="1" height="5" fill="#00e000"/>
<rect x="802" y="371" width="5" height="1" fill="#00e000"/>
<rect x="812" y="369" width="1" height="11" fill="#000"/>
<rect x="810" y="369" width="5" height="8" fill="#000"/>
<rect x="820" y="376" width="1" height="6" fill="#00e000"/>
<rect x="818" y="378" width="5" height="1" fill="#00e000"/>
<rect x="828" y="376" width="1" height="2" fill="#000"/>
<rect x="826" y="376" width="5" height="2" fill="#000"/>
<rect x="836" y="378" width="1" height="6" fill="#000"/>
<rect x="834" y="378" width="5" height="4" fill="#000"/>
<rect x="844" y="376" width="1" height="7" fill="#000"/>
<rect x="842" y="379" width="5" height="4" fill="#000"/>
<rect x="843" y="380" width="3" height="2" fill="#fff"/>
<rect x="852" y="375" width="1" height="4" fill="#000"/>
<rect x="850" y="376" width="5" height="3" fill="#000"/>
<rect x="860" y="376" width="1" height="4" fill="#00e000"/>
<rect x="858" y="377" width="5" height="1" fill="#00e000"/>
<rect x="868" y="376" width="1" height="4" fill="#000"/>
<rect x="866" y="376" width="5" height="4" fill="#000"/>
<rect x="876" y="376" width="1" height="3" fill="#000"/>
<rect x="874" y="376" width="5" height="3" fill="#000"/>
<rect x="875" y="377" width="3" height="1" fill="#fff"/>
<rect x="884" y="377" width="1" height="2" fill="#000"/>
<rect x="882" y="377" width="5" height="2" fill="#000"/>
<rect x="892" y="376" width="1" height="3" fill="#000"/>
<rect x="890" y="377" width="5" height="1" fill="#000"/>
<rect x="900" y="372" width="1" height="5" fill="#000"/>
<rect x="898" y="373" width="5" height="2" fill="#000"/>
<rect x="908" y="373" width="1" height="2" fill="#000"/>
<rect x="906" y="373" width="5" height="2" fill="#000"/>
<rect x="916" y="374" width="1" height="8" fill="#000"/>
<rect x="914" y="374" width="5" height="2" fill="#000"/>
<rect x="924" y="375" width="1" height="6" fill="#000"/>
<rect x="922" y="377" width="5" height="1" fill="#000"/>
<rect x="932" y="371" width="1" height="6" fill="#000"/>
<rect x="930" y="371" width="5" height="6" fill="#000"/>
<rect x="931" y="372" width="3" height="4" fill="#fff"/>
<rect x="940" y="369" width="1" height="14" fill="#00e000"/>
<rect x="938" y="373" width="5" height="1" fill="#00e000"/>
<rect x="948" y="372" width="1" height="7" fill="#000"/>
<rect x="946" y="373" width="5" height="6" fill="#000"/>
<rect x="956" y="371" width="1" height="8" fill="#000"/>
<rect x="954" y="375" width="5" height="1" fill="#000"/>
<rect x="964" y="372" width="1" height="6" fill="#000"/>
<rect x="962" y="374" width="5" height="4" fill="#000"/>
<rect x="972" y="372" width="1" height="6" fill="#000"/>
<rect x="970" y="374" width="5" height="4" fill="#000"/>
<rect x="980" y="371" width="1" height="7" fill="#000"/>
<rect x="978" y="373" width="5" height="5" fill="#000"/>
<rect x="988" y="372" width="1" height="6" fill="#000"/>
<rect x="986" y="374" width="5" height="4" fill="#000"/>
<rect x="996" y="377" width="1" height="6" fill="#000"/>
<rect x="994" y="378" width="5" height="3" fill="#000"/>
<rect x="1004" y="380" width="1" height="6" fill="#000"/>
<rect x="1002" y="381" width="5" height="5" fill="#000"/>
<rect x="1012" y="383" width="1" height="5" fill="#000"/>
<rect x="1010" y="383" width="5" height="5" fill="#000"/>
<rect x="1020" y="385" width="1" height="2" fill="#000"/>
<rect x="1018" y="385" width="5" height="2" fill="#000"/>
<path d="M261 254.500H301" stroke="#ff0000"/>
<path d="M259 312.5 L500 399.5 L508 400.6 L515 398.2 L567 381.6 L610 366.8" stroke="#ff0000" stroke-width="2.500" fill="none" stroke-linejoin="round"/>
<path d="M610 366.8 L631 366.8 L651 368.2 L669 369.6 L689 370.3 L709 371.3 L727 373.1 L745 373.9 L768 374.3 L792 376 L822 377.8 L859 379.2 L880 380.9 L898 381.6 L917 382.7 L937 383.7 L955 384.9 L975 385.8 L993 386.8 L1013 386.8" stroke="#ff0000" stroke-width="2" fill="none" stroke-linejoin="round"/>
<path d="M259 260.8 L274 260.8 L281 261.8 L289 261.8 L296 260.6 L315.5 260.6 L324 262.6 L335.3 266.4 L346.5 269.9 L356.4 272.5 L370.5 277 L379 282.4 L388.9 289 L398.7 295.1 L407.2 301 L419.9 308 L429.8 314.4 L441 324.2 L450.9 332.7 L459.4 338.8 L469.3 342.6 L480 347.5 L489 354.2 L499.2 358.8 L516.2 368.2 L536 372.4 L548.6 375 L567 380.2 L581 382.6 L600 383.5 L625.4 385.1 L640.9 384.9 L656.4 383.2 L684.6 383 L698.7 382.3 L712.8 380.2 L738.2 377.2 L759.4 376.6 L769.3 375.2 L792.4 374.5 L847.4 374.5 L850.3 373.3 L856 373.3 L858.7 374.5 L880 374.5 L882.7 375.5 L911 375.5 L915 377.2 L1008.6 377.2 L1010 377.6 L1021.6 377.6" stroke="#0000ff" stroke-width="3" fill="none" stroke-linejoin="round"/>
<use href="#fu" x="268.3" y="240"/>
<use href="#fu" x="308.3" y="240"/>
<use href="#fu" x="356.3" y="280"/>
<use href="#fu" x="412.3" y="330"/>
<use href="#fu" x="492.3" y="352.5"/>
<use href="#fu" x="548.3" y="360.5"/>
<use href="#fu" x="612.3" y="352.5"/>
<use href="#fu" x="660.3" y="359"/>
<use href="#fu" x="724.3" y="354"/>
<use href="#fu" x="764.3" y="354"/>
<use href="#fu" x="796.3" y="354"/>
<use href="#fu" x="852.3" y="359"/>
<use href="#fu" x="876.3" y="359"/>
<use href="#fu" x="900.3" y="357"/>
<use href="#fu" x="940.3" y="355"/>
<use href="#fu" x="980.3" y="357"/>
<use href="#fd" x="284.7" y="285"/>
<use href="#fd" x="332.7" y="334.5"/>
<use href="#fd" x="396.7" y="374.5"/>
<use href="#fd" x="452.7" y="407.5"/>
<use href="#fd" x="508.7" y="413.5"/>
<use href="#fd" x="540.7" y="405.5"/>
<use href="#fd" x="564.7" y="412.5"/>
<use href="#fd" x="620.7" y="402"/>
<use href="#fd" x="708.7" y="394.5"/>
<use href="#fd" x="748.7" y="386.5"/>
<use href="#fd" x="780.7" y="389.5"/>
<use href="#fd" x="844.7" y="394.5"/>
<use href="#fd" x="868.7" y="393"/>
<use href="#fd" x="940.7" y="393.5"/>
</g>
<g clip-path="url(#cs)" fill="none" stroke-width="1">
<path d="M260 495.500L275 496.500L290 498.500L304 498.500" stroke="#ff0000" stroke-width="1.500"/>
<path d="M256 493.5 L270 497 L287.3 500.7 L300 500.5 L316.9 500.3 L324.7 516.4 L332.5 532 L341.6 543.7 L355.9 554.1 L365 567.1 L371.5 571 L378 584 L388.4 606.2 L396.3 619.2 L404 628.3 L411.9 629 L421 636.1 L430 638.7 L441.8 643.4 L452.2 651.7 L460 656.1 L469.1 649 L480 643.4 L492.3 631.2 L500.1 637.4 L515.8 631.2 L525.2 624 L540.8 618.7 L548.6 607.7 L556.5 605.2 L564.3 606.5 L578.4 598.3 L597.2 585.8 L612.8 566.4 L628.5 559.2 L645.7 542.6 L656 537.9 L674.4 529.5 L699.5 522.6 L708.9 522.3 L724.5 510.1 L746.4 503.8 L771.5 497.5 L787.1 497.5 L796.5 495 L805.9 495 L815.3 498.8 L830.9 501.3 L845 505.4 L859.1 503.8 L868.5 506.6 L877.9 503.8 L896.6 502.2 L921.7 502.2 L938.9 498.2 L953 500.7 L971.8 500.7 L981.2 499.1 L993.7 499.7 L1003.1 503.8 L1012.4 508.2 L1019.7 511.3" stroke="#ff00ff"/>
<path d="M256 491.3 L287.3 494.4 L312 497.2 L324.7 499.5 L339 507.3 L355.9 520.3 L374.1 538.5 L388.4 559.3 L404 580.2 L421 601 L437.9 619.2 L453.5 634.8 L461 638.5 L469.1 641.8 L480 644.3 L484.5 645.3 L506.4 644.3 L515.8 642.1 L553.3 624 L572.1 617.1 L612.8 593.6 L640 572.7 L658.8 557.6 L677.6 545.1 L702.6 532.6 L724.5 523.2 L749.5 513.8 L765.2 509.1 L780.8 503.8 L796.5 499.7 L812.1 498.2 L840.3 498.8 L871.6 502.9 L899.8 503.8 L921.7 503.5 L937.3 502.2 L971.8 501.3 L993.7 499.7 L1006.2 500.4 L1019.7 503.5" stroke="#0000ff"/>
<path d="M300.500 485v8M298 489.500l2.500 3.500 2.500-3.500z" stroke="#ff0000" fill="#ff0000"/>
</g>
<path d="M259.500 109V666M259 109.500H1233M1232.500 109V666M259 479.500H1233M259 481.500H1233M259 665.500H1233" stroke="#000" fill="none"/>
<path d="M1233 130.5h2M1233 168.5h2M1233 206.5h2M1233 244.5h2M1233 282.5h2M1233 320.5h2M1233 358.5h2M1233 396.5h2M1233 434.5h2M1233 472.5h2M1233 483.500h2M1233 499.500h2M1233 664.500h2M260.5 666v3M324.5 666v3M388.5 666v3M452.5 666v3M516.5 666v3M580.5 666v3M644.5 666v3M708.5 666v3M772.5 666v3M836.5 666v3M900.5 666v3M964.5 666v3" stroke="#000" fill="none"/>
<rect x="1234" y="379" width="35" height="12" fill="#000"/>
<g shape-rendering="auto" font-size="10" fill="#000" stroke="#000" stroke-width=".25">
<text x="1239" y="133" font-size="9.700" textLength="27" lengthAdjust="spacingAndGlyphs">1.6835</text>
<text x="1239" y="171" font-size="9.700" textLength="27" lengthAdjust="spacingAndGlyphs">1.6805</text>
<text x="1239" y="209" font-size="9.700" textLength="27" lengthAdjust="spacingAndGlyphs">1.6775</text>
<text x="1239" y="247" font-size="9.700" textLength="27" lengthAdjust="spacingAndGlyphs">1.6745</text>
<text x="1239" y="285" font-size="9.700" textLength="27" lengthAdjust="spacingAndGlyphs">1.6715</text>
<text x="1239" y="323" font-size="9.700" textLength="27" lengthAdjust="spacingAndGlyphs">1.6685</text>
<text x="1239" y="361" font-size="9.700" textLength="27" lengthAdjust="spacingAndGlyphs">1.6655</text>
<text x="1239" y="399" font-size="9.700" textLength="27" lengthAdjust="spacingAndGlyphs">1.6625</text>
<text x="1239" y="437" font-size="9.700" textLength="27" lengthAdjust="spacingAndGlyphs">1.6595</text>
<text x="1239" y="475" font-size="9.700" textLength="27" lengthAdjust="spacingAndGlyphs">1.6565</text>
<text x="1239" y="388" font-size="9.700" textLength="27" lengthAdjust="spacingAndGlyphs" fill="#fff" stroke="#fff">1.6634</text>
<text x="1236" y="492" textLength="40" lengthAdjust="spacingAndGlyphs" clip-path="url(#cr)">0.000231</text>
<text x="1236" y="502" textLength="17" lengthAdjust="spacingAndGlyphs">0.00</text>
<text x="1236" y="663" textLength="32" lengthAdjust="spacingAndGlyphs">-0.0023</text>
<text x="259" y="678" textLength="51" lengthAdjust="spacingAndGlyphs">10 Mar 2014</text>
<text x="323" y="678" textLength="55" lengthAdjust="spacingAndGlyphs">10 Mar 09:45</text>
<text x="387" y="678" textLength="55" lengthAdjust="spacingAndGlyphs">10 Mar 11:45</text>
<text x="451" y="678" textLength="55" lengthAdjust="spacingAndGlyphs">10 Mar 13:45</text>
<text x="515" y="678" textLength="55" lengthAdjust="spacingAndGlyphs">10 Mar 15:45</text>
<text x="579" y="678" textLength="55" lengthAdjust="spacingAndGlyphs">10 Mar 17:45</text>
<text x="643" y="678" textLength="55" lengthAdjust="spacingAndGlyphs">10 Mar 19:45</text>
<text x="707" y="678" textLength="55" lengthAdjust="spacingAndGlyphs">10 Mar 21:45</text>
<text x="771" y="678" textLength="55" lengthAdjust="spacingAndGlyphs">10 Mar 23:45</text>
<text x="835" y="678" textLength="55" lengthAdjust="spacingAndGlyphs">11 Mar 01:45</text>
<text x="899" y="678" textLength="55" lengthAdjust="spacingAndGlyphs">11 Mar 03:45</text>
<text x="963" y="678" textLength="55" lengthAdjust="spacingAndGlyphs">11 Mar 05:45</text>
<path d="M263 116h7l-3.500 4z" fill="#000"/>
<text x="275" y="121" textLength="58" lengthAdjust="spacingAndGlyphs">GBPUSD,M15</text>
<text x="341" y="121" textLength="121" lengthAdjust="spacingAndGlyphs" xml:space="preserve">1.6633 1.6634 1.6633 1.6634</text>
<text x="266.500" y="324.500" textLength="86" lengthAdjust="spacingAndGlyphs">#25095113 buy 0.05</text>
<text x="266.500" y="366.500" textLength="103" lengthAdjust="spacingAndGlyphs">#25097715 sell limit 0.05</text>
<text x="264" y="494" textLength="103" lengthAdjust="spacingAndGlyphs">FX5 -0.000166 -0.000052</text>
</g>
</svg><!-- chart tabs -->
<div class="a" style="left:256px;top:685px;width:1017px;height:20px;background:#e1e1e1;border-top:1px solid #000"></div>
<div class="a" style="left:259px;top:685px;width:84px;height:19px;background:#fff;border:1px solid #000;border-top:none;border-bottom-width:2px"></div>
<div class="t ctab" style="left:269px;color:#000">GBPUSD,M15</div>
<div class="t ctab" style="left:353px">EURUSD,H1</div>
<div class="t ctab" style="left:433px">EURGBP,Daily</div>
<div class="t ctab" style="left:522px">GBPJPY,H1</div>
<div class="t ctab" style="left:598px">AUDUSD,H4</div>
<div class="t ctab" style="left:677px">USDJPY,H1</div>
<div class="t ctab" style="left:753px">EURCHF,H4</div>
<div class="t ctab" style="left:833px">EURJPY,H1</div>
<div class="vl" style="left:422px;top:688px;height:12px;background:#888"></div>
<div class="vl" style="left:511px;top:688px;height:12px;background:#888"></div>
<div class="vl" style="left:587px;top:688px;height:12px;background:#888"></div>
<div class="vl" style="left:666px;top:688px;height:12px;background:#888"></div>
<div class="vl" style="left:742px;top:688px;height:12px;background:#888"></div>
<div class="vl" style="left:823px;top:688px;height:12px;background:#888"></div>
<div class="vl" style="left:899px;top:688px;height:12px;background:#888"></div>
<svg class="a" style="left:1244px;top:690px" width="26" height="10" viewBox="0 0 26 10"><path d="M6 1v8l-4-4zM19 1v8l4-4z" fill="#a0a0a0"/></svg>
<!-- status bar -->
<div class="hl" style="left:4px;top:704px;width:252px;background:#a8a8a8"></div><div class="hl" style="left:4px;top:705px;width:1270px;background:#fff"></div>
<div class="t st" style="left:6px">Для справки, нажмите F1</div>
<div class="t st" style="left:558px">Default</div>
<div class="t st" style="left:668px">2014.03.11 04:15</div>
<div class="t st" style="left:769px">O: 1.6642</div>
<div class="t st" style="left:841px">H: 1.6642</div>
<div class="t st" style="left:911px">L: 1.6638</div>
<div class="t st" style="left:980px">C: 1.6640</div>
<div class="t st" style="left:1051px">V: 31</div>
<div class="t st" style="left:1170px">156/1 kb</div>
<div class="vl" style="left:553px;top:709px;height:15px;background:#a8a8a8"></div>
<div class="vl" style="left:663px;top:709px;height:15px;background:#a8a8a8"></div>
<div class="vl" style="left:761px;top:709px;height:15px;background:#a8a8a8"></div>
<div class="vl" style="left:832px;top:709px;height:15px;background:#a8a8a8"></div>
<div class="vl" style="left:906px;top:709px;height:15px;background:#a8a8a8"></div>
<div class="vl" style="left:975px;top:709px;height:15px;background:#a8a8a8"></div>
<div class="vl" style="left:1046px;top:709px;height:15px;background:#a8a8a8"></div>
<div class="vl" style="left:1113px;top:709px;height:15px;background:#a8a8a8"></div>
<svg class="a" style="left:1118px;top:711px" width="24" height="13" viewBox="0 0 24 13" shape-rendering="crispEdges"><path d="M1 0v11M4 0v9M7 0v8M10 0v7M13 0v5M16 0v4M19 0v3M22 0v2" stroke="#6b8e23" stroke-width="2"/><path d="M1 11v2M4 9v4M7 8v5M10 7v6M13 5v8M16 4v9M19 3v10M22 2v11" stroke="#1c4a78" stroke-width="2"/></svg>
<svg class="a" style="left:1258px;top:710px" width="15" height="15" viewBox="0 0 15 15"><path d="M14 1L1 14M14 5L5 14M14 9L9 14" stroke="#b8b8b8" stroke-width="1.500"/><path d="M15 2L2 15M15 6L6 15M15 10L10 15" stroke="#fff" stroke-width="1"/></svg>
</body>
</html>
